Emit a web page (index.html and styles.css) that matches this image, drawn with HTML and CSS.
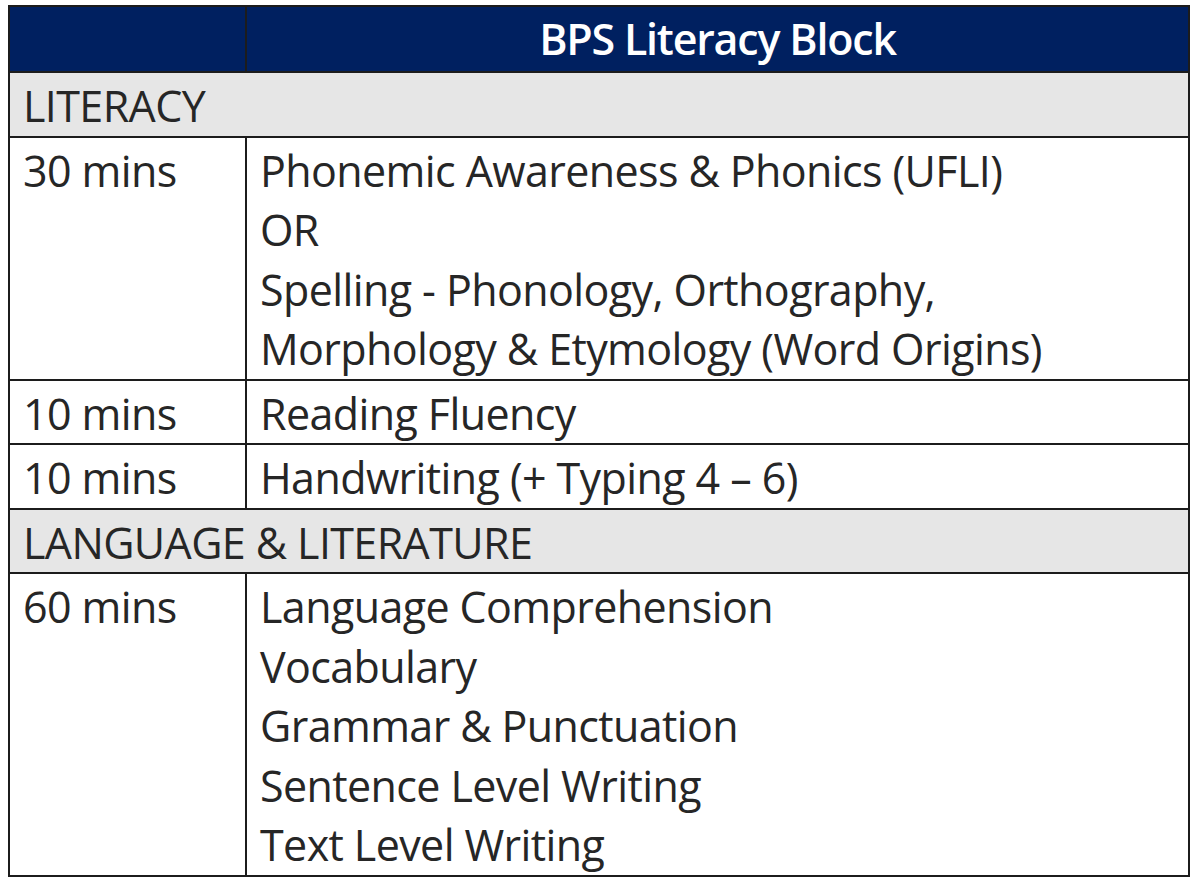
FILE: index.html
```html
<!DOCTYPE html>
<html lang="en">
<head>
<meta charset="utf-8">
<title>BPS Literacy Block</title>
<link rel="stylesheet" href="styles.css">
</head>
<body>
<table class="block">
  <colgroup>
    <col class="col-time">
    <col class="col-content">
  </colgroup>
  <thead>
    <tr class="head">
      <th></th>
      <th>BPS Literacy Block</th>
    </tr>
  </thead>
  <tbody>
    <tr class="section"><td colspan="2">LITERACY</td></tr>
    <tr class="r4">
      <td>30 mins</td>
      <td>Phonemic Awareness &amp; Phonics (UFLI)<br>OR<br>Spelling - Phonology, Orthography,<br>Morphology &amp; Etymology (Word Origins)</td>
    </tr>
    <tr class="r1">
      <td>10 mins</td>
      <td>Reading Fluency</td>
    </tr>
    <tr class="r1">
      <td>10 mins</td>
      <td>Handwriting (+ Typing 4 – 6)</td>
    </tr>
    <tr class="section"><td colspan="2">LANGUAGE &amp; LITERATURE</td></tr>
    <tr class="r5">
      <td>60 mins</td>
      <td>Language Comprehension<br>Vocabulary<br>Grammar &amp; Punctuation<br>Sentence Level Writing<br>Text Level Writing</td>
    </tr>
  </tbody>
</table>
</body>
</html>
```

FILE: styles.css
```css
html, body {
  margin: 0;
  padding: 0;
  background: #ffffff;
}

body {
  padding: 5px 0 0 8px;
  font-family: "Open Sans", "Noto Sans", sans-serif;
  color: #262626;
}

.block {
  border-collapse: collapse;
  width: 1182px;
  table-layout: fixed;
  font-size: 43px;
  letter-spacing: -0.6px;
  line-height: 59.5px;
}

.col-time {
  width: 237px;
}

.block th,
.block td {
  border: 2px solid #1c1c1c;
  padding: 3px 13px 0;
  vertical-align: top;
  text-align: left;
  white-space: nowrap;
}

.head th {
  background: #002060;
  color: #ffffff;
  font-weight: 600;
  letter-spacing: -1.2px;
  text-align: center;
  height: 64px;
  padding: 0;
  vertical-align: middle;
}

.section td {
  background: #e6e6e6;
}
```
